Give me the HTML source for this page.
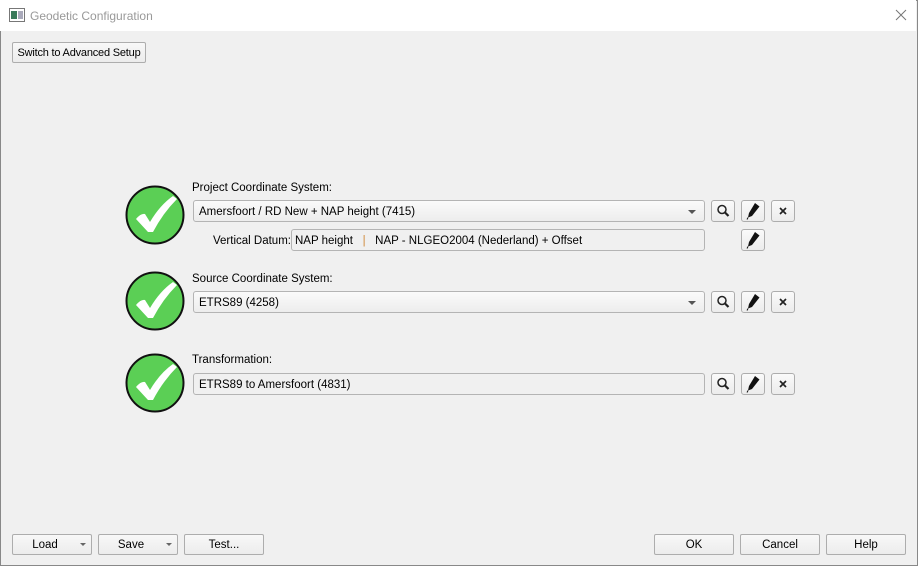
<!DOCTYPE html>
<html><head><style>
*{box-sizing:border-box;margin:0;padding:0}
body{width:918px;height:566px;background:#f0f0f0;font-family:"Liberation Sans",sans-serif;font-size:11.5px;color:#000;position:relative;overflow:hidden;white-space:nowrap}
.win{position:absolute;left:0;top:0;width:918px;height:566px;border:1px solid #888}
.title{position:absolute;left:0;top:0;width:916px;height:31px;background:#fff}
.title span{position:absolute;left:30px;top:9px;color:#999;font-size:12px}
.a{position:absolute}
.btn{position:absolute;height:21px;border:1px solid #adadad;border-radius:2px;background:linear-gradient(#f8f8f8,#ececec);text-align:center;line-height:20px}
.combo{position:absolute;height:22px;border:1px solid #b4b4b4;border-radius:3px;background:linear-gradient(#fafafa,#ededed);padding-left:5px;line-height:22px}
.field{position:absolute;height:22px;border:1px solid #b4b4b4;border-radius:3px;background:#f0f0f0;padding-left:3px;line-height:22px}
.ib{position:absolute;width:24px;height:22px;border:1px solid #adadad;border-radius:3px;background:linear-gradient(#fafafa,#ececec)}
.arrow{position:absolute;width:0;height:0;border-left:4px solid transparent;border-right:4px solid transparent;border-top:4px solid #555}
.chk{position:absolute;width:60px;height:60px}
</style></head><body>
<div class="win"></div>
<div class="title">
<svg class="a" style="left:9px;top:8px" width="16" height="14"><rect x="0.5" y="0.5" width="15" height="13" fill="#fff" stroke="#777"/><rect x="2" y="3" width="6" height="8" fill="#3a7a5a"/><rect x="9" y="3" width="5" height="8" fill="#aab"/></svg>
<span>Geodetic Configuration</span>
<svg class="a" style="left:895px;top:9px" width="12" height="12"><path d="M1 1L11 11M11 1L1 11" stroke="#777" stroke-width="1"/></svg>
</div>
<div class="btn" style="left:12px;top:42px;width:134px;font-size:11px;letter-spacing:-0.2px">Switch to Advanced Setup</div>

<svg class="chk" style="left:125px;top:185px" viewBox="0 0 60 60"><circle cx="30" cy="30" r="28.5" fill="#5bcf55" stroke="#111" stroke-width="2"/><path d="M11 34 Q16 28 20 29 L25 37 Q35 20 48 11 L52 14 Q38 28 28 47 L23 47 Z" fill="#fff"/></svg>
<svg class="chk" style="left:125px;top:271px" viewBox="0 0 60 60"><circle cx="30" cy="30" r="28.5" fill="#5bcf55" stroke="#111" stroke-width="2"/><path d="M11 34 Q16 28 20 29 L25 37 Q35 20 48 11 L52 14 Q38 28 28 47 L23 47 Z" fill="#fff"/></svg>
<svg class="chk" style="left:125px;top:353px" viewBox="0 0 60 60"><circle cx="30" cy="30" r="28.5" fill="#5bcf55" stroke="#111" stroke-width="2"/><path d="M11 34 Q16 28 20 29 L25 37 Q35 20 48 11 L52 14 Q38 28 28 47 L23 47 Z" fill="#fff"/></svg>

<div class="a" style="left:192px;top:182px">Project Coordinate System:</div>
<div class="combo" style="left:193px;top:200px;width:512px">Amersfoort / RD New + NAP height (7415)<div class="arrow" style="right:8px;top:9px"></div></div>
<div class="a" style="left:213px;top:235px">Vertical Datum:</div>
<div class="field" style="left:291px;top:229px;width:414px">NAP height &nbsp;&nbsp;<span style="color:#d08a3a">|</span>&nbsp;&nbsp; NAP - NLGEO2004 (Nederland) + Offset</div>

<div class="a" style="left:192px;top:273px">Source Coordinate System:</div>
<div class="combo" style="left:193px;top:291px;width:512px">ETRS89 (4258)<div class="arrow" style="right:8px;top:9px"></div></div>

<div class="a" style="left:192px;top:354px">Transformation:</div>
<div class="field" style="left:193px;top:373px;width:512px;padding-left:5px">ETRS89 to Amersfoort (4831)</div>

<div class="ib" style="left:711px;top:200px"><svg width="22" height="20"><circle cx="10" cy="8.5" r="4" fill="none" stroke="#222" stroke-width="1.5"/><path d="M13 11.5L16.5 15" stroke="#222" stroke-width="2.2"/></svg></div>
<div class="ib" style="left:741px;top:200px"><svg width="22" height="20"><path d="M13 2L17.5 5.5L10 15L6 16.5L7 12Z" fill="#111"/><path d="M6 16.5L5 18.5" stroke="#111"/></svg></div>
<div class="ib" style="left:771px;top:200px"><svg width="22" height="20"><path d="M8 7L14 13M14 7L8 13" stroke="#222" stroke-width="1.7"/></svg></div>
<div class="ib" style="left:741px;top:229px"><svg width="22" height="20"><path d="M13 2L17.5 5.5L10 15L6 16.5L7 12Z" fill="#111"/><path d="M6 16.5L5 18.5" stroke="#111"/></svg></div>

<div class="ib" style="left:711px;top:291px"><svg width="22" height="20"><circle cx="10" cy="8.5" r="4" fill="none" stroke="#222" stroke-width="1.5"/><path d="M13 11.5L16.5 15" stroke="#222" stroke-width="2.2"/></svg></div>
<div class="ib" style="left:741px;top:291px"><svg width="22" height="20"><path d="M13 2L17.5 5.5L10 15L6 16.5L7 12Z" fill="#111"/><path d="M6 16.5L5 18.5" stroke="#111"/></svg></div>
<div class="ib" style="left:771px;top:291px"><svg width="22" height="20"><path d="M8 7L14 13M14 7L8 13" stroke="#222" stroke-width="1.7"/></svg></div>

<div class="ib" style="left:711px;top:373px"><svg width="22" height="20"><circle cx="10" cy="8.5" r="4" fill="none" stroke="#222" stroke-width="1.5"/><path d="M13 11.5L16.5 15" stroke="#222" stroke-width="2.2"/></svg></div>
<div class="ib" style="left:741px;top:373px"><svg width="22" height="20"><path d="M13 2L17.5 5.5L10 15L6 16.5L7 12Z" fill="#111"/><path d="M6 16.5L5 18.5" stroke="#111"/></svg></div>
<div class="ib" style="left:771px;top:373px"><svg width="22" height="20"><path d="M8 7L14 13M14 7L8 13" stroke="#222" stroke-width="1.7"/></svg></div>

<div class="btn" style="left:12px;top:534px;width:80px;padding-right:14px">Load<div class="arrow" style="right:5px;top:8px;border-width:3px 3px 0 3px;border-top-color:#666"></div></div>
<div class="btn" style="left:98px;top:534px;width:80px;padding-right:14px">Save<div class="arrow" style="right:5px;top:8px;border-width:3px 3px 0 3px;border-top-color:#666"></div></div>
<div class="btn" style="left:184px;top:534px;width:80px">Test...</div>
<div class="btn" style="left:654px;top:534px;width:80px">OK</div>
<div class="btn" style="left:740px;top:534px;width:80px">Cancel</div>
<div class="btn" style="left:826px;top:534px;width:80px">Help</div>
</body></html>
